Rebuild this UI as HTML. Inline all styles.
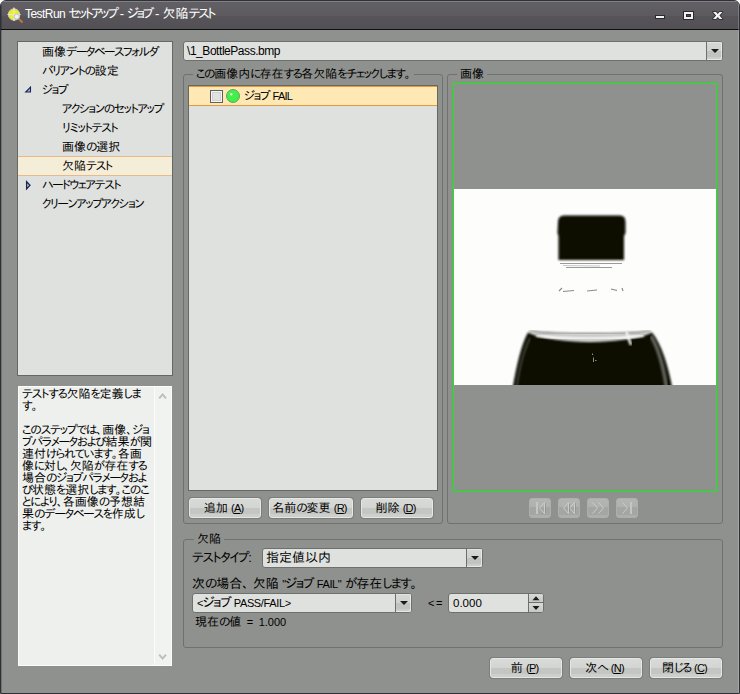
<!DOCTYPE html>
<html lang="ja">
<head>
<meta charset="utf-8">
<title>TestRun セットアップ - ジョブ - 欠陥テスト</title>
<style>
html,body{margin:0;padding:0;}
body{width:740px;height:694px;overflow:hidden;background:#fff;position:relative;
 font-family:"Liberation Sans","IPAPGothic","IPAGothic","Noto Sans CJK JP",sans-serif;font-size:12px;color:#000;}
.k{letter-spacing:-1.5px;}
.l1{letter-spacing:-.45px;}
.l2{font-size:11px;letter-spacing:-.8px;}
.f13{font-size:13px;}
.help .k{letter-spacing:-1.3px;}
.abs{position:absolute;box-sizing:border-box;}
#win{left:0;top:0;width:740px;height:694px;background:#8f918e;border:1px solid #303136;border-radius:6px 6px 0 0;overflow:hidden;}
#inner{left:-1px;top:-1px;width:740px;height:694px;}
#title{left:0;top:0;width:740px;height:30px;background:linear-gradient(#33343a 0,#33343a 1px,#808185 1px,#808185 2px,#626064 2px,#5c5a5e 16px,#565458 16px,#535156 29px,#0e0e10 29px);}
#title .t{left:25px;top:6px;color:#fff;font-size:13px;line-height:16px;white-space:nowrap;}
#title .t{word-spacing:-.5px;}
#title .t .k{letter-spacing:-2.45px;}
.panel{background:#dfe1de;border:1px solid #666865;}
.tree div{position:absolute;left:0;right:0;height:19px;line-height:19px;white-space:nowrap;}
.txt{white-space:nowrap;line-height:14px;}
.btn{border:1px solid #e6e8e5;border-radius:3px;text-align:center;line-height:18px;white-space:nowrap;padding-right:3px;
 background:linear-gradient(#d9dbd8 0,#d3d5d2 9px,#c4c6c3 9px,#c4c6c3 15px,#cdcfcc 15px,#cdcfcc 18px);box-shadow:0 0 0 1px rgba(90,92,89,.35);}
.nbtn{border:1px solid #adafac;border-radius:3px;background:linear-gradient(#b3b5b2 0,#b0b2af 8px,#a4a6a3 8px,#a4a6a3 16px,#adafac 16px,#adafac 18px);}
.grp{border:1px solid #6f716e;border-radius:3px;}
.grp .lg{position:absolute;top:-8px;background:#8f918e;padding:0 3px;line-height:14px;white-space:nowrap;}
.combo{background:#dfe1de;border:1px solid #6e706d;border-radius:3px;line-height:18px;padding-left:3px;white-space:nowrap;}
.dd{background:linear-gradient(#d6d8d5 0,#d0d2cf 9px,#c1c3c0 9px,#c1c3c0 15px,#cbcdca 15px);border-left:1px solid #6e706d;border-radius:0 2px 2px 0;box-shadow:inset -1px -1px 0 rgba(255,255,255,.55),inset 0 1px 0 rgba(255,255,255,.3);}
.dd:after{content:"";position:absolute;left:4px;top:7px;border:4px solid transparent;border-top:4px solid #1a1a1a;border-bottom:0;}
</style>
</head>
<body>
<div id="win" class="abs"><div id="inner" class="abs">
 <div id="title" class="abs">
  <svg class="abs" style="left:6px;top:6px" width="18" height="18" viewBox="0 0 18 18">
   <circle cx="8" cy="8.5" r="5.7" fill="#eeee22" stroke="#c9c9b8" stroke-width="1"/>
   <path d="M8 1.5V15M1.5 8.5H14.5" stroke="#e8e8e0" stroke-width="1.2" fill="none"/>
   <path d="M12.5 12.5L16 16" stroke="#c07a30" stroke-width="1.8" stroke-linecap="round"/>
   <circle cx="10.8" cy="10.6" r="2.6" fill="#e6f2f8" stroke="#b8c4cc" stroke-width="1"/>
  </svg>
  <div class="abs t"><span class="l1" style="letter-spacing:-.55px;font-size:12px">TestRun</span> <span class="k">セットアップ</span> - <span class="k">ジョブ</span> - 欠陥<span class="k">テスト</span></div>
  <svg class="abs" style="left:650px;top:8px" width="80" height="14" viewBox="650 8 80 14">
   <rect x="655.5" y="15.5" width="9" height="3" fill="#f2f2f2" stroke="#2a2a2c" stroke-width="1"/>
   <rect x="683.5" y="11.5" width="10" height="8" fill="#f2f2f2" stroke="#2a2a2c" stroke-width="1"/>
   <rect x="686.5" y="14.5" width="4" height="2" fill="#4a494d" stroke="#2a2a2c" stroke-width="1"/>
   <path d="M713 12H716L717.750 14L719.500 12H722.500L719.400 15.500L722.500 19H719.500L717.750 17L716 19H713L716.100 15.500Z" fill="#f4f4f4" stroke="#2a2a2c" stroke-width="1.600" stroke-linejoin="round" paint-order="stroke"/>
  </svg>
 </div>

 <div class="abs" style="left:738px;top:2px;width:1px;height:691px;background:rgba(255,255,255,.2);"></div>
 <div class="abs" style="left:1px;top:4px;width:1px;height:689px;background:rgba(0,0,0,.22);"></div>

 <!-- tree -->
 <div class="abs panel tree" style="left:17px;top:41px;width:156px;height:335px;">
  <div style="top:1px;padding-left:24px;">画像<span class="k">データベースフォルダ</span></div>
  <div style="top:20px;padding-left:24px;"><span class="k">バリアントの</span>設定</div>
  <div style="top:39px;padding-left:24px;"><span class="k">ジョブ</span></div>
  <div style="top:58px;padding-left:44px;"><span class="k">アクションのセットアップ</span></div>
  <div style="top:77px;padding-left:44px;"><span class="k">リミットテスト</span></div>
  <div style="top:96px;padding-left:44px;">画像<span class="k">の</span>選択</div>
  <div style="top:114px;height:20px;padding-left:44px;background:#f4edd8;border-top:1px solid #e9b98c;border-bottom:1px solid #e9b98c;box-sizing:border-box;line-height:19px;">欠陥<span class="k">テスト</span></div>
  <div style="top:134px;padding-left:24px;"><span class="k">ハードウェアテスト</span></div>
  <div style="top:153px;padding-left:24px;"><span class="k">クリーンアップアクション</span></div>
  <svg class="abs" style="left:6px;top:43px" width="10" height="10" viewBox="0 0 10 10"><path d="M6.500 2V7H1.700Z" fill="#a4acc6" stroke="#1c2656" stroke-width="1.100"/></svg>
  <svg class="abs" style="left:6px;top:137px" width="10" height="12" viewBox="0 0 10 12"><path d="M2.600 2.700L6 6.300L2.600 9.900Z" fill="#c4c9da" stroke="#1c2656" stroke-width="1.300"/></svg>
 </div>

 <!-- help -->
 <div class="abs panel" style="left:18px;top:386px;width:154px;height:280px;background:#eef0ed;border-color:#fbfbfa;">
  <div class="abs help" style="left:3px;top:1px;width:140px;line-height:12px;white-space:nowrap;"><span class="k">テストする</span>欠陥<span class="k">を</span>定義<span class="k">しま</span><br><span class="k">す</span>。<br><br><span class="k">このステップでは</span>、画像、<span class="k">ジョ</span><br><span class="k">ブパラメータおよび</span>結果<span class="k">が</span>関<br>連付<span class="k">けられています</span>。各画<br>像<span class="k">に</span>対<span class="k">し</span>、欠陥<span class="k">が</span>存在<span class="k">する</span><br>場合<span class="k">のジョブパラメータおよ</span><br><span class="k">び</span>状態<span class="k">を</span>選択<span class="k">します</span>。<span class="k">このこ</span><br><span class="k">とにより</span>、各画像<span class="k">の</span>予想結<br>果<span class="k">のデータベースを</span>作成<span class="k">し</span><br><span class="k">ます</span>。</div>
  <div class="abs" style="right:0;top:0;width:17px;height:278px;background:#f1f3f0;border-left:1px solid #fbfbfa;"></div>
  <svg class="abs" style="left:139px;top:5px" width="10" height="8" viewBox="0 0 10 8"><path d="M1.200 6.300L4.600 2.400L8 6.300" fill="none" stroke="#bcbebb" stroke-width="2"/></svg>
  <svg class="abs" style="left:139px;top:266px" width="10" height="8" viewBox="0 0 10 8"><path d="M1.200 1.700L4.600 5.600L8 1.700" fill="none" stroke="#bcbebb" stroke-width="2"/></svg>
 </div>

 <!-- top combo -->
 <div class="abs combo" style="left:183px;top:41px;width:540px;height:20px;"><span class="l1">\1_BottlePass.bmp</span></div>
 <div class="abs dd" style="left:706px;top:42px;width:16px;height:18px;"></div>

 <!-- group 1 -->
 <div class="abs grp" style="left:183px;top:74px;width:260px;height:450px;"><span class="lg" style="left:9px;"><span class="k">この</span>画像内<span class="k">に</span>存在<span class="k">する</span>各欠陥<span class="k">をチェックします</span>。</span></div>
 <div class="abs panel" style="left:188px;top:85px;width:250px;height:406px;">
  <div class="abs" style="left:0;top:0;width:248px;height:20px;background:#fee9b4;border-top:1px solid #e9973f;border-bottom:1px solid #e9973f;"></div>
  <div class="abs" style="left:21px;top:4px;width:13px;height:13px;border:1px solid #5c5e62;background:#f5f6f4;"><div class="abs" style="left:1px;top:1px;width:9px;height:9px;background:#e1e3e0;border:1px solid #d0d2cf;"></div></div>
  <div class="abs" style="left:37px;top:3px;width:14px;height:14px;border-radius:50%;background:radial-gradient(circle at 36% 36%,#e8ffe8 0,#e8ffe8 .7px,#44f24e 1.6px,#3dec48 100%);border:1px solid #62a458;"></div>
  <div class="abs txt" style="left:55px;top:3px;"><span class="k">ジョブ</span> <span class="l2">FAIL</span></div>
 </div>
 <div class="abs btn" style="left:189px;top:498px;width:72px;height:20px;">追加 <span class="l2">(<u>A</u>)</span></div>
 <div class="abs btn" style="left:269px;top:498px;width:84px;height:20px;">名前<span class="k">の</span>変更 <span class="l2">(<u>R</u>)</span></div>
 <div class="abs btn" style="left:361px;top:498px;width:72px;height:20px;">削除 <span class="l2">(<u>D</u>)</span></div>

 <!-- group 2 -->
 <div class="abs grp" style="left:447px;top:74px;width:276px;height:450px;"><span class="lg" style="left:9px;">画像</span></div>
 <div class="abs" style="left:453px;top:83px;width:264px;height:409px;border:1px solid #0cf40c;"></div>
 <svg class="abs" style="left:454px;top:189px" width="262" height="196" viewBox="454 189 262 196">
  <defs>
   <filter id="b1" x="-5%" y="-5%" width="110%" height="110%"><feGaussianBlur stdDeviation="0.8"/></filter>
   <filter id="b2" x="-5%" y="-20%" width="110%" height="140%"><feGaussianBlur stdDeviation="1.1"/></filter>
   <clipPath id="cp"><rect x="454" y="189" width="263" height="196"/></clipPath>
  </defs>
  <rect x="454" y="189" width="263" height="196" fill="#fdfefb"/>
  <g clip-path="url(#cp)">
   <path d="M558 222Q558 215.500 564 215.500L620 215.500Q625.500 215.500 625.500 222L625.500 233L624 236L624 260L558.500 260L558.500 236L557.500 233Z" fill="#070806" filter="url(#b1)"/>
   <path d="M560 263.500L622 263.500M566 267.500L612 267.500" stroke="#9a9c99" stroke-width="1" fill="none"/>
   <path d="M563 265.500L600 266" stroke="#c8cac7" stroke-width="1" fill="none"/>
   <path d="M559 291L562 288M563 291.500L574 290.500M587 291L597 290M611 289L617 290.500M622 288L623 291" stroke="#8a8c89" stroke-width="1.2" fill="none"/>
   <path d="M529 331C560 334.500 620 334.500 651 331C625 344 555 344 529 331Z" fill="#c4c6c2" filter="url(#b1)"/>
   <path d="M528 332.500C556 345 624 345 652 332.500C662 345 669 368 673 392L512 392C516 368 521 345 528 332.500Z" fill="#070806" filter="url(#b1)"/>
   <path d="M667 392C664 368 658 348 651 336" stroke="#9a9c99" stroke-width="3.500" fill="none" opacity=".6" filter="url(#b1)"/>
   <path d="M516 392C519 368 524 350 530 338" stroke="#9a9c99" stroke-width="1.500" fill="none" opacity=".5" filter="url(#b1)"/>
   <path d="M536 335.500C562 339.500 618 339.500 644 335.500" stroke="#fbfcf9" stroke-width="2.600" fill="none" filter="url(#b1)"/>
   <path d="M529 331C560 334.500 620 334.500 651 331" stroke="#5a5c59" stroke-width="1.200" fill="none" filter="url(#b1)"/>
   <path d="M626 331L631 345" stroke="#f4f6f2" stroke-width="2.500" fill="none" filter="url(#b1)"/>
   <path d="M592.500 353.500V355M593.500 357.500V362M595 360.500H596.500" stroke="#8a8c89" stroke-width="1" fill="none"/>
  </g>
 </svg>
 <div class="abs nbtn" style="left:529px;top:498px;width:22px;height:20px;"></div>
 <div class="abs nbtn" style="left:558px;top:498px;width:22px;height:20px;"></div>
 <div class="abs nbtn" style="left:587px;top:498px;width:22px;height:20px;"></div>
 <div class="abs nbtn" style="left:616px;top:498px;width:22px;height:20px;"></div>
 <svg class="abs" style="left:529px;top:498px" width="110" height="20" viewBox="529 498 110 20" fill="none" stroke="#cacccb" stroke-width="1" stroke-linejoin="miter">
  <path d="M536.500 502V514M537.500 502V514" stroke="#c4c6c3"/>
  <path d="M544.500 502.500L539.500 508L544.500 513.500Z"/>
  <path d="M568.500 502.500L563.500 508L568.500 513.500Z M574.500 502.500L569.500 508L574.500 513.500Z"/>
  <path d="M592.500 502.500L597.500 508L592.500 513.500 M598.500 502.500L603.500 508L598.500 513.500"/>
  <path d="M622.500 502.500L627.500 508L622.500 513.500"/>
  <path d="M630.500 502V514M631.500 502V514" stroke="#c4c6c3"/>
  <path d="M545.500 503V513M575.500 503V513M569.500 504V512" stroke="#8d8f8c" opacity=".7"/>
 </svg>

 <!-- group 3 -->
 <div class="abs grp" style="left:183px;top:539px;width:540px;height:109px;"><span class="lg" style="left:10px;">欠陥</span></div>
 <div class="abs txt f13" style="left:192px;top:551px;"><span class="k">テストタイプ</span>:</div>
 <div class="abs combo" style="left:262px;top:548px;width:221px;height:20px;font-size:13px;">指定値以内</div>
 <div class="abs dd" style="left:466px;top:549px;width:16px;height:18px;"></div>
 <div class="abs txt f13" style="left:192px;top:577px;">次<span class="k">の</span>場合、<span style="margin-left:4px"></span>欠陥 <span class="l2">"</span><span class="k">ジョブ</span> <span class="l2" style="letter-spacing:-.4px">FAIL"</span> <span class="k">が</span>存在<span class="k">します</span>。</div>
 <div class="abs combo" style="left:192px;top:593px;width:220px;height:20px;padding-left:4px;"><span class="l2">&lt;</span><span class="f13"><span class="k">ジョブ</span></span> <span class="l2" style="letter-spacing:-.35px">PASS/FAIL&gt;</span></div>
 <div class="abs dd" style="left:395px;top:594px;width:16px;height:18px;"></div>
 <div class="abs txt" style="left:428px;top:596px;font-size:11px;letter-spacing:1.5px;">&lt;=</div>
 <div class="abs combo" style="left:448px;top:593px;width:96px;height:20px;font-size:11.5px;padding-left:4px;">0.000</div>
 <div class="abs" style="left:528px;top:594px;width:15px;height:18px;border-left:1px solid #6e706d;background:linear-gradient(#d8dad7 0,#c6c8c5 8px,#6e706d 8px,#6e706d 9px,#d8dad7 9px,#c6c8c5 18px);border-radius:0 2px 2px 0;"></div>
 <svg class="abs" style="left:529px;top:594px" width="14" height="18" viewBox="0 0 14 18"><path d="M3.500 6.200L7 2.200L10.500 6.200Z M3.500 12L7 16L10.500 12Z" fill="#1a1a1a"/></svg>
 <div class="abs txt" style="left:195px;top:615px;">現在<span class="k">の</span>値<span style="font-size:11px;word-spacing:2.5px;"> = 1.000</span></div>

 <div class="abs btn" style="left:490px;top:658px;width:72px;height:20px;">前 <span class="l2">(<u>P</u>)</span></div>
 <div class="abs btn" style="left:570px;top:658px;width:72px;height:20px;">次<span class="k">へ</span> <span class="l2">(<u>N</u>)</span></div>
 <div class="abs btn" style="left:650px;top:658px;width:72px;height:20px;">閉<span class="k">じる</span> <span class="l2">(<u>C</u>)</span></div>
</div></div>
</body>
</html>
